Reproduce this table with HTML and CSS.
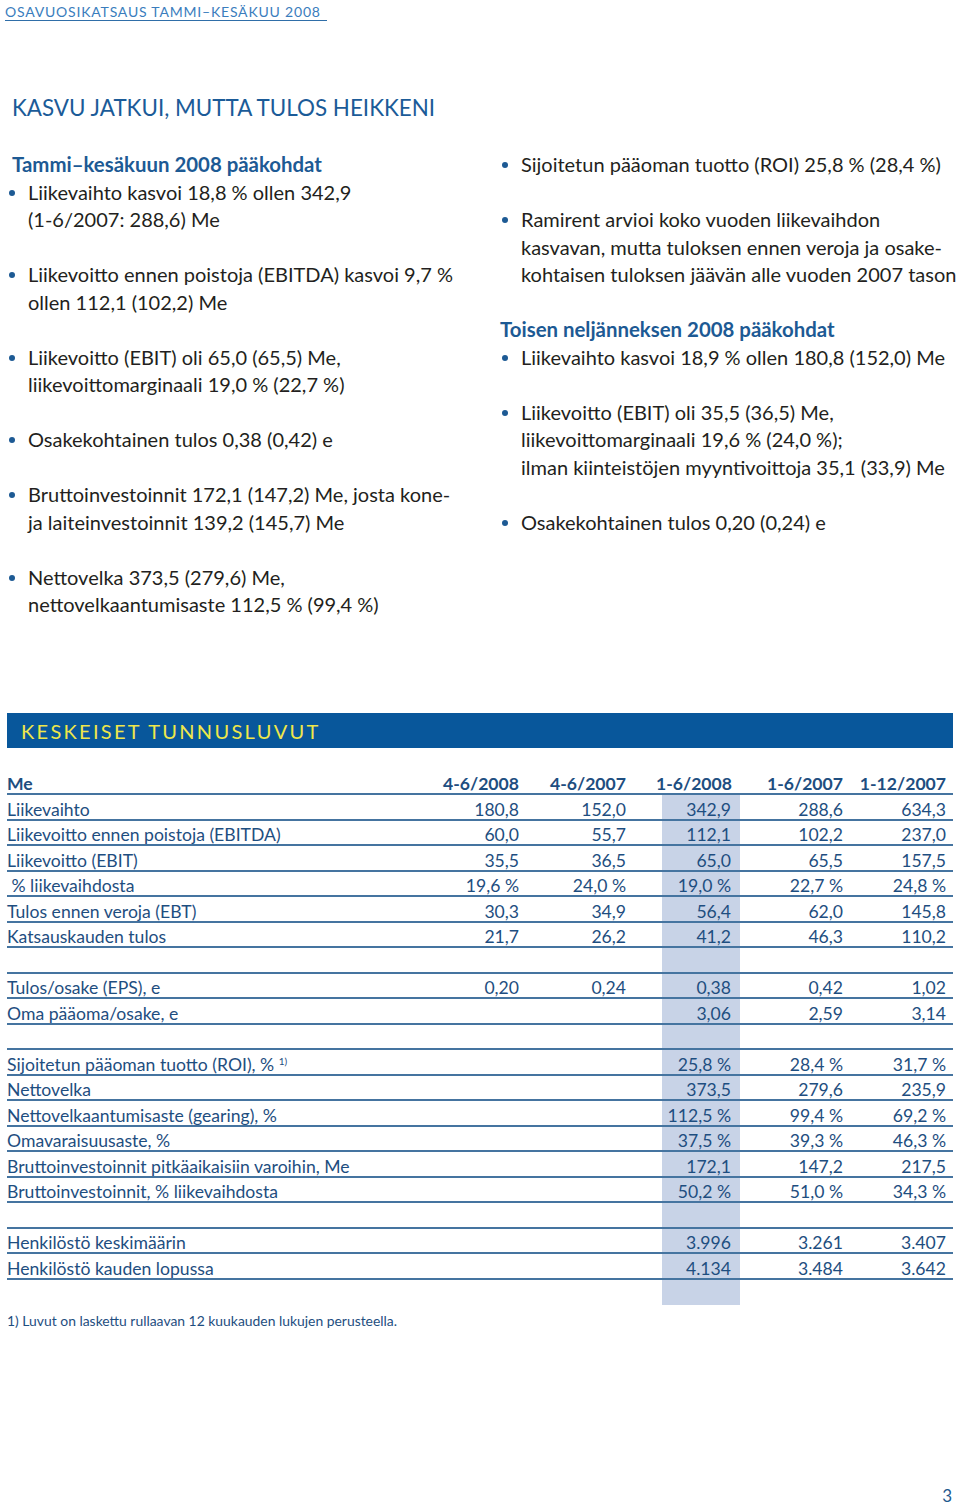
FILE: index.html
```html
<!DOCTYPE html>
<html lang="fi">
<head>
<meta charset="utf-8">
<title>Osavuosikatsaus tammi–kesäkuu 2008</title>
<link rel="stylesheet" href="styles.css">
</head>
<body>
<div class="page">
  <header class="running-head"><span>OSAVUOSIKATSAUS TAMMI–KESÄKUU 2008</span></header>

  <h1 class="title">KASVU JATKUI, MUTTA TULOS HEIKKENI</h1>

  <div class="highlights">
    <div class="col col-left">
      <h2 class="sub">Tammi–kesäkuun 2008 pääkohdat</h2>
      <ul class="bullets">
        <li>Liikevaihto kasvoi 18,8 % ollen 342,9<br>(1-6/2007: 288,6) Me</li>
        <li>Liikevoitto ennen poistoja (EBITDA) kasvoi 9,7 %<br>ollen 112,1 (102,2) Me</li>
        <li>Liikevoitto (EBIT) oli 65,0 (65,5) Me,<br>liikevoittomarginaali 19,0 % (22,7 %)</li>
        <li>Osakekohtainen tulos 0,38 (0,42) e</li>
        <li>Bruttoinvestoinnit 172,1 (147,2) Me, josta kone-<br>ja laiteinvestoinnit 139,2 (145,7) Me</li>
        <li>Nettovelka 373,5 (279,6) Me,<br>nettovelkaantumisaste 112,5 % (99,4 %)</li>
      </ul>
    </div>
    <div class="col col-right">
      <ul class="bullets">
        <li>Sijoitetun pääoman tuotto (ROI) 25,8 % (28,4 %)</li>
        <li>Ramirent arvioi koko vuoden liikevaihdon<br>kasvavan, mutta tuloksen ennen veroja ja osake-<br>kohtaisen tuloksen jäävän alle vuoden 2007 tason</li>
      </ul>
      <h2 class="sub">Toisen neljänneksen 2008 pääkohdat</h2>
      <ul class="bullets">
        <li>Liikevaihto kasvoi 18,9 % ollen 180,8 (152,0) Me</li>
        <li>Liikevoitto (EBIT) oli 35,5 (36,5) Me,<br>liikevoittomarginaali 19,6 % (24,0 %);<br>ilman kiinteistöjen myyntivoittoja 35,1 (33,9) Me</li>
        <li>Osakekohtainen tulos 0,20 (0,24) e</li>
      </ul>
    </div>
  </div>

  <div class="band">KESKEISET TUNNUSLUVUT</div>

  <table class="figures">
    <colgroup>
      <col class="c-label"><col class="c-n1"><col class="c-n2"><col class="c-n3"><col class="c-n4"><col class="c-n5">
    </colgroup>
    <thead>
      <tr><th class="lbl">Me</th><th>4-6/2008</th><th>4-6/2007</th><th>1-6/2008</th><th>1-6/2007</th><th>1-12/2007</th></tr>
    </thead>
    <tbody>
      <tr><td class="lbl">Liikevaihto</td><td>180,8</td><td>152,0</td><td class="hl">342,9</td><td>288,6</td><td>634,3</td></tr>
      <tr><td class="lbl">Liikevoitto ennen poistoja (EBITDA)</td><td>60,0</td><td>55,7</td><td class="hl">112,1</td><td>102,2</td><td>237,0</td></tr>
      <tr><td class="lbl">Liikevoitto (EBIT)</td><td>35,5</td><td>36,5</td><td class="hl">65,0</td><td>65,5</td><td>157,5</td></tr>
      <tr><td class="lbl">&nbsp;% liikevaihdosta</td><td>19,6 %</td><td>24,0 %</td><td class="hl">19,0 %</td><td>22,7 %</td><td>24,8 %</td></tr>
      <tr><td class="lbl">Tulos ennen veroja (EBT)</td><td>30,3</td><td>34,9</td><td class="hl">56,4</td><td>62,0</td><td>145,8</td></tr>
      <tr><td class="lbl">Katsauskauden tulos</td><td>21,7</td><td>26,2</td><td class="hl">41,2</td><td>46,3</td><td>110,2</td></tr>
      <tr class="gap"><td class="lbl"></td><td></td><td></td><td class="hl"></td><td></td><td></td></tr>
      <tr><td class="lbl">Tulos/osake (EPS), e</td><td>0,20</td><td>0,24</td><td class="hl">0,38</td><td>0,42</td><td>1,02</td></tr>
      <tr><td class="lbl">Oma pääoma/osake, e</td><td></td><td></td><td class="hl">3,06</td><td>2,59</td><td>3,14</td></tr>
      <tr class="gap"><td class="lbl"></td><td></td><td></td><td class="hl"></td><td></td><td></td></tr>
      <tr><td class="lbl">Sijoitetun pääoman tuotto (ROI), % <sup>1)</sup></td><td></td><td></td><td class="hl">25,8 %</td><td>28,4 %</td><td>31,7 %</td></tr>
      <tr><td class="lbl">Nettovelka</td><td></td><td></td><td class="hl">373,5</td><td>279,6</td><td>235,9</td></tr>
      <tr><td class="lbl">Nettovelkaantumisaste (gearing), %</td><td></td><td></td><td class="hl">112,5 %</td><td>99,4 %</td><td>69,2 %</td></tr>
      <tr><td class="lbl">Omavaraisuusaste, %</td><td></td><td></td><td class="hl">37,5 %</td><td>39,3 %</td><td>46,3 %</td></tr>
      <tr><td class="lbl">Bruttoinvestoinnit pitkäaikaisiin varoihin, Me</td><td></td><td></td><td class="hl">172,1</td><td>147,2</td><td>217,5</td></tr>
      <tr><td class="lbl">Bruttoinvestoinnit, % liikevaihdosta</td><td></td><td></td><td class="hl">50,2 %</td><td>51,0 %</td><td>34,3 %</td></tr>
      <tr class="gap"><td class="lbl"></td><td></td><td></td><td class="hl"></td><td></td><td></td></tr>
      <tr><td class="lbl">Henkilöstö keskimäärin</td><td></td><td></td><td class="hl">3.996</td><td>3.261</td><td>3.407</td></tr>
      <tr><td class="lbl">Henkilöstö kauden lopussa</td><td></td><td></td><td class="hl">4.134</td><td>3.484</td><td>3.642</td></tr>
      <tr class="tail"><td class="lbl"></td><td></td><td></td><td class="hl"></td><td></td><td></td></tr>
    </tbody>
  </table>

  <p class="footnote">1) Luvut on laskettu rullaavan 12 kuukauden lukujen perusteella.</p>

  <footer class="folio">3</footer>
</div>
</body>
</html>
```

FILE: styles.css
```css
html, body {
  margin: 0;
  padding: 0;
  background: #ffffff;
}

.page {
  width: 960px;
  height: 1511px;
  font-family: Lato, "Open Sans", "DejaVu Sans", sans-serif;
  color: #231f20;
  display: flex;
  flex-direction: column;
}

.running-head {
  padding: 1px 0 0 5px;
  height: 19px;
}

.running-head span {
  display: inline-block;
  font-size: 14px;
  line-height: 16px;
  letter-spacing: 0.8px;
  color: #3a7dbd;
  padding-right: 6px;
  border-bottom: 1px solid #2f6ea8;
}

.title {
  margin: 73px 0 0 12px;
  font-size: 22.4px;
  line-height: 30px;
  font-weight: 400;
  color: #1b5b98;
}

.highlights {
  margin-top: 28px;
  display: flex;
}

.col-left {
  width: 502px;
  padding-left: 9px;
  box-sizing: border-box;
}

.col-right {
  width: 458px;
  padding-left: 0;
}

.sub {
  margin: 0 0 0 3px;
  font-size: 20.4px;
  line-height: 27.5px;
  font-weight: 700;
  color: #1d5a94;
}

.col-right .sub {
  margin-left: -2px;
}

.bullets {
  list-style: none;
  margin: 0;
  padding: 0;
}

.bullets + .sub {
  margin-top: 27.5px;
}

.bullets li {
  display: flex;
  font-size: 20px;
  line-height: 27.5px;
}

.bullets li + li {
  margin-top: 27.5px;
}

.bullets li::before {
  content: "";
  flex: none;
  width: 6px;
  height: 6px;
  border-radius: 50%;
  background: #1d5a94;
  margin: 11px 13px 0 0;
}

.band {
  margin: 94px 0 0 7px;
  width: 946px;
  height: 35px;
  box-sizing: border-box;
  background: #08579b;
  color: #efe74a;
  font-size: 20px;
  line-height: 36px;
  letter-spacing: 2.3px;
  padding-left: 14px;
}

.figures {
  margin: 22px 0 0 7px;
  width: 946px;
  table-layout: fixed;
  border-collapse: separate;
  border-spacing: 0;
  color: #1e4e80;
  font-size: 17.6px;
}

.c-label { width: 424px; }
.c-n1 { width: 96px; }
.c-n2 { width: 107px; }
.c-n3 { width: 106px; }
.c-n4 { width: 111px; }
.c-n5 { width: 102px; }

.figures th,
.figures td {
  padding: 4.5px 8px 0 0;
  line-height: 19px;
  height: 19px;
  border-bottom: 2px solid #4574a0;
  text-align: right;
  white-space: nowrap;
  font-weight: 400;
}

.figures th {
  font-weight: 700;
}

.figures .lbl {
  text-align: left;
  padding-right: 0;
}

.figures td:nth-child(6),
.figures th:nth-child(6) {
  padding-right: 7px;
}

.figures .hl {
  padding-right: 9px;
  background: linear-gradient(to right, transparent 28px, #c8d3e7 28px);
}

.figures sup {
  font-size: 10px;
  line-height: 0;
  vertical-align: 6px;
}

.figures .tail td {
  border-bottom: none;
  height: 21px;
}

.footnote {
  margin: 8px 0 0 7px;
  font-size: 13.9px;
  line-height: 16px;
  color: #1e4e80;
}

.folio {
  margin-top: auto;
  padding: 0 8px 5px 0;
  text-align: right;
  font-size: 17px;
  line-height: 20px;
  color: #1f5a8e;
}
```
